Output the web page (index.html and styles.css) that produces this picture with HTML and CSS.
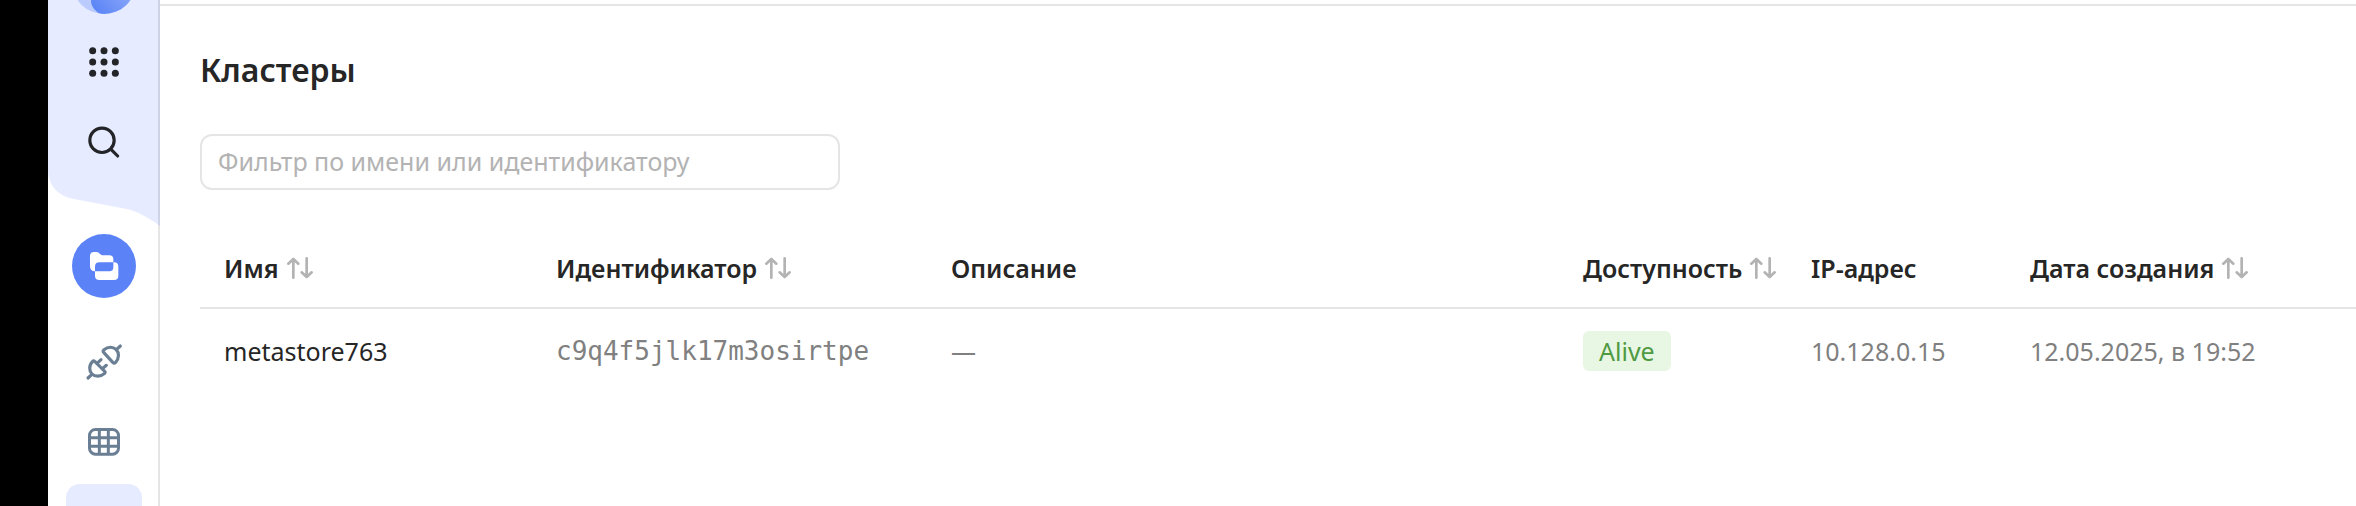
FILE: index.html
```html
<!DOCTYPE html>
<html lang="ru">
<head>
<meta charset="utf-8">
<title>Кластеры</title>
<link rel="stylesheet" href="styles.css">
</head>
<body>
<svg class="defs" width="0" height="0" aria-hidden="true">
  <symbol id="sort" viewBox="0 0 78 66">
    <path d="M19 62V6M4 20L19 6L34 20M59 4V60M44 46L59 60L74 46" fill="none" stroke="currentColor" stroke-width="8" stroke-linecap="round" stroke-linejoin="round"/>
  </symbol>
</svg>
<div class="app">
  <nav class="sidebar" aria-label="Навигация">
    <svg class="wave" viewBox="0 0 112 226" aria-hidden="true">
      <path d="M0 0H112V226C101 218 91 212 79 209L26 199C9 196 0 184 0 170Z" fill="#e6ebff"/>
    </svg>
    <a class="logo" href="#" aria-label="Главная">
      <svg viewBox="0 0 64 64" aria-hidden="true">
        <defs>
          <clipPath id="disc"><circle cx="32" cy="32" r="32"/></clipPath>
          <linearGradient id="shine" x1="0" y1="1" x2="1" y2="0"><stop offset="0" stop-color="#5580f5"/><stop offset="1" stop-color="#a9bdfb"/></linearGradient>
        </defs>
        <g clip-path="url(#disc)">
          <rect width="64" height="64" fill="#bccbfd"/>
          <path d="M19 50C19 40 30 28 64 10V64H28C22 60 19 56 19 50Z" fill="url(#shine)"/>
        </g>
      </svg>
    </a>
    <a class="item" href="#" aria-label="Все сервисы">
      <svg class="icon dark" viewBox="0 0 114 114" aria-hidden="true">
        <g fill="currentColor">
          <circle cx="23" cy="23" r="10.500"/><circle cx="57" cy="23" r="10.500"/><circle cx="91" cy="23" r="10.500"/>
          <circle cx="23" cy="57" r="10.500"/><circle cx="57" cy="57" r="10.500"/><circle cx="91" cy="57" r="10.500"/>
          <circle cx="23" cy="91" r="10.500"/><circle cx="57" cy="91" r="10.500"/><circle cx="91" cy="91" r="10.500"/>
        </g>
      </svg>
    </a>
    <a class="item" href="#" aria-label="Поиск">
      <svg class="icon dark" viewBox="0 0 114 114" aria-hidden="true">
        <g fill="none" stroke="currentColor" stroke-width="9.500" stroke-linecap="round"><circle cx="51" cy="52" r="36.500"/><path d="M78 79L98 99"/></g>
      </svg>
    </a>
    <a class="service" href="#" aria-label="Каталог">
      <svg class="icon" viewBox="255 81 114 114" aria-hidden="true">
        <path fill="#fff" fill-rule="evenodd" d="M282 96H289C298 96 301 106 309 106H328Q340 106 340 118V142Q340 154 328 154H285Q270 154 270 139V108Q270 96 282 96ZM298 127H342Q355 127 355 140V167Q355 180 342 180H298Q285 180 285 167V140Q285 127 298 127Z"/>
      </svg>
    </a>
    <a class="item" href="#" aria-label="Подключения">
      <svg class="icon slate" viewBox="255 369 114 114" aria-hidden="true">
        <g fill="none" stroke="currentColor" stroke-width="9.500" stroke-linecap="round" stroke-linejoin="round">
          <path d="M311 397Q307 393 312 389C324 379 340 380 348 388C358 398 358 414 347 427Q343 432 339 428Z"/>
          <path d="M350 388L361 378M291 430L303 419M307 446L319 436M264 474L275 464"/>
          <path d="M278 424Q281 420 285 425L313 453Q318 457 313 461C302 471 284 470 276 462C267 453 266 436 278 424Z"/>
        </g>
      </svg>
    </a>
    <a class="item" href="#" aria-label="Таблицы">
      <svg class="icon slate" viewBox="255 609 114 114" aria-hidden="true">
        <g fill="none" stroke="currentColor" stroke-width="9"><rect x="268.500" y="628.500" width="87" height="74" rx="18"/><path d="M298 628V703M325 628V703M268 653H356M268 679H356"/></g>
      </svg>
    </a>
    <a class="item selected" href="#" aria-label="Кластеры" aria-current="page"></a>
  </nav>
  <main class="content">
    <h1 class="title">Кластеры</h1>
    <input class="filter" type="text" placeholder="Фильтр по имени или идентификатору" aria-label="Фильтр по имени или идентификатору">
    <table class="clusters">
      <colgroup><col class="c-name"><col class="c-id"><col><col class="c-state"><col class="c-ip"><col class="c-date"></colgroup>
      <thead>
        <tr>
          <th scope="col"><button class="sort" type="button">Имя<svg aria-hidden="true"><use href="#sort"/></svg></button></th>
          <th scope="col"><button class="sort" type="button">Идентификатор<svg aria-hidden="true"><use href="#sort"/></svg></button></th>
          <th scope="col">Описание</th>
          <th scope="col"><button class="sort" type="button">Доступность<svg aria-hidden="true"><use href="#sort"/></svg></button></th>
          <th scope="col">IP-адрес</th>
          <th scope="col"><button class="sort" type="button">Дата создания<svg aria-hidden="true"><use href="#sort"/></svg></button></th>
        </tr>
      </thead>
      <tbody>
        <tr>
          <td class="name">metastore763</td>
          <td class="mono">c9q4f5jlk17m3osirtpe</td>
          <td>—</td>
          <td><span class="badge">Alive</span></td>
          <td>10.128.0.15</td>
          <td>12.05.2025, в 19:52</td>
        </tr>
      </tbody>
    </table>
  </main>
</div>
</body>
</html>
```
FILE: styles.css
```css
* { box-sizing: border-box; }

body {
  margin: 0;
  background: #fff;
  color: #262626;
  font-family: "Noto Sans", "Open Sans", sans-serif;
  font-size: 25px;
  line-height: 36px;
}

.defs { position: absolute; }

.app {
  display: flex;
  height: 100vh;
  overflow: hidden;
  border-left: 48px solid #000;
}

.sidebar {
  position: relative;
  flex: none;
  width: 112px;
  display: flex;
  flex-direction: column;
  align-items: center;
}

.sidebar::after {
  content: "";
  position: absolute;
  inset: 0 0 0 auto;
  width: 2px;
  background: rgba(0, 0, 0, 0.1);
}

.wave {
  position: absolute;
  top: 0;
  left: 0;
  width: 100%;
}

.sidebar a { position: relative; flex: none; }

.logo { height: 64px; margin-top: -50px; margin-bottom: 8px; }
.logo svg { display: block; width: 64px; height: 64px; }

.item, .service {
  display: flex;
  align-items: center;
  justify-content: center;
}

.item { width: 76px; height: 80px; }
.icon { width: 38px; height: 38px; }
.dark { color: #222427; }
.slate { color: #6b7f94; }

.service {
  width: 64px;
  height: 64px;
  margin: 52px 0 24px;
  border-radius: 50%;
  background: #5c82f7;
}

.selected { margin-top: 2px; border-radius: 14px; background: #e6ebff; }

.content {
  flex: 1;
  min-width: 0;
  margin-top: 4px;
  padding: 42px 0 0 40px;
  border-top: 2px solid #e5e5e5;
}

.title {
  margin: 0;
  font-size: 32px;
  line-height: 44px;
  font-weight: 600;
}

.filter {
  display: block;
  width: 640px;
  max-width: 100%;
  height: 56px;
  margin: 42px 0 38px;
  padding: 0 16px 2px;
  border: 2px solid #e5e5e5;
  border-radius: 12px;
  background: #fff;
  color: inherit;
  font: inherit;
}

.filter::placeholder { color: #b3b3b3; opacity: 1; }

.clusters {
  width: 100%;
  table-layout: fixed;
  border-collapse: collapse;
}

.c-name { width: 356px; }
.c-id { width: 395px; }
.c-state { width: 228px; }
.c-ip { width: 219px; }
.c-date { width: 326px; }

th, td {
  padding: 0;
  text-align: left;
  white-space: nowrap;
}

th:first-child, td:first-child { padding-left: 24px; }

th {
  height: 80px;
  border-bottom: 2px solid #e5e5e5;
  font-weight: 600;
}

td { height: 84px; color: #808080; }

.sort {
  display: flex;
  align-items: center;
  gap: 8px;
  padding: 0;
  border: 0;
  background: none;
  color: inherit;
  font: inherit;
}

.sort svg { width: 26px; height: 22px; color: #b3b3b3; }

.name { color: #262626; }
.mono { font-family: "DejaVu Sans Mono", monospace; font-size: 26px; }

.badge {
  display: inline-block;
  padding: 0 16px;
  border-radius: 6px;
  background: #e8f7e4;
  color: #4f9a41;
  line-height: 40px;
}
```
